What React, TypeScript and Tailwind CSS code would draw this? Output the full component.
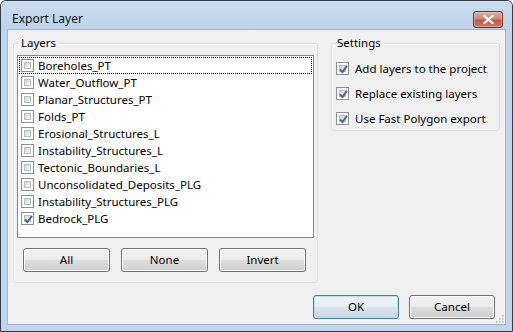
import React from "react";

const LAYERS = [
  { name: "Boreholes_PT", checked: false },
  { name: "Water_Outflow_PT", checked: false },
  { name: "Planar_Structures_PT", checked: false },
  { name: "Folds_PT", checked: false },
  { name: "Erosional_Structures_L", checked: false },
  { name: "Instability_Structures_L", checked: false },
  { name: "Tectonic_Boundaries_L", checked: false },
  { name: "Unconsolidated_Deposits_PLG", checked: false },
  { name: "Instability_Structures_PLG", checked: false },
  { name: "Bedrock_PLG", checked: true },
];

const SETTINGS = [
  "Add layers to the project",
  "Replace existing layers",
  "Use Fast Polygon export",
];

// win7 style checkbox, 13x13
const CheckBox = ({ checked }: { checked: boolean }) => (
  <span className="relative flex h-[13px] w-[13px] shrink-0 border border-[#8e8f8f] bg-white p-[2px]">
    <span className="block h-full w-full border border-[#b9bdc2] bg-[linear-gradient(135deg,#d3d6db,#f4f5f6)]" />
    {checked && (
      <svg className="absolute left-[1px] top-[1px]" width="11" height="11" viewBox="0 0 11 11">
        <path d="M2 5.4 L4.4 8.2 L9 1.8" fill="none" stroke="#4d6391" strokeWidth="2" strokeLinejoin="round" />
      </svg>
    )}
  </span>
);

const Button = ({ label, def, w }: { label: string; def?: boolean; w: string }) => (
  <button
    className={`${w} h-[24px] rounded-[3px] border text-[11.5px] text-black ${
      def
        ? "border-[#3c7fb1] bg-[linear-gradient(#eef4f8,#e6eef4_50%,#d8e3ec_50%,#cbd7e0)] shadow-[inset_0_0_0_1px_#b9e2f8]"
        : "border-[#707070] bg-[linear-gradient(#f2f2f2,#ebebeb_50%,#dddddd_50%,#cfcfcf)] shadow-[inset_0_0_0_1px_#fbfbfb]"
    }`}
  >
    {label}
  </button>
);

export default function App() {
  return (
    <div className="flex h-[332px] w-[513px] flex-col rounded-t-[6px] border border-[#343c45] bg-[#bfd5eb] font-['Segoe_UI','Noto_Sans',sans-serif] text-[11.5px] leading-[16px] text-black">
      {/* title bar */}
      <div className="flex h-[28px] shrink-0 items-start rounded-t-[5px] bg-[linear-gradient(#c9dcf0,#bdd4ea)]">
        <span className="ml-[11px] mt-[10px] text-[12px] text-[#111]">Export Layer</span>
        <span className="ml-auto mr-[9px] mt-[10px] flex h-[17px] w-[30px] items-center justify-center rounded-[3px] border border-[#6e2a1f] bg-[linear-gradient(#e0ab9e,#d18675_45%,#c25a44_55%,#cf7560)] shadow-[inset_0_0_0_1px_rgba(255,255,255,0.35)]">
          <svg width="11" height="9" viewBox="0 0 11 9">
            <path d="M1.5 1 L9.5 8 M9.5 1 L1.5 8" stroke="#fff" strokeWidth="2.2" strokeLinecap="square" />
          </svg>
        </span>
      </div>

      {/* client area */}
      <div className="mx-[6px] mb-[6px] flex flex-1 flex-col border border-[#9db4cc] bg-[#f0f0f0] pt-[5px]">
        <div className="flex items-start">
          <fieldset className="ml-[5px] w-[305px] rounded-[3px] border border-[#d5dfe5] px-[3px] pb-[10px] shadow-[inset_1px_1px_0_#fff]">
            <legend className="ml-[2px] px-[2px] leading-[16px]">Layers</legend>
            <div className="mt-[4px] h-[183px] border border-[#828790] bg-white px-[1px] pt-[1px]">
              {LAYERS.map((l, i) => (
                <div
                  key={l.name}
                  className={`flex h-[17px] items-center pl-[1px] ${
                    i === 0 ? "outline outline-1 -outline-offset-1 outline-dotted outline-black" : ""
                  }`}
                >
                  <span className="ml-[1px]">
                    <CheckBox checked={l.checked} />
                  </span>
                  <span className="ml-[4px] whitespace-nowrap">{l.name}</span>
                </div>
              ))}
            </div>
            <div className="ml-[6px] mt-[10px] flex gap-[11px]">
              <Button label="All" w="w-[87px]" />
              <Button label="None" w="w-[87px]" />
              <Button label="Invert" w="w-[87px]" />
            </div>
          </fieldset>

          <fieldset className="ml-[13px] w-[169px] rounded-[3px] border border-[#d5dfe5] pb-[3px] pl-[4px] shadow-[inset_1px_1px_0_#fff]">
            <legend className="px-[1px] leading-[16px]">Settings</legend>
            <div className="mt-[9px] flex flex-col gap-[8px]">
              {SETTINGS.map((s) => (
                <div key={s} className="flex h-[17px] items-center">
                  <CheckBox checked />
                  <span className="ml-[6px] whitespace-nowrap">{s}</span>
                </div>
              ))}
            </div>
          </fieldset>
        </div>

        <div className="relative mt-auto flex justify-end gap-[10px] pb-[5px] pr-[10px]">
          <Button label="OK" def w="w-[86px]" />
          <Button label="Cancel" w="w-[86px]" />
          <svg className="absolute bottom-[1px] right-[1px]" width="10" height="10" viewBox="0 0 10 10">
            {[
              [8, 2],
              [8, 5],
              [5, 5],
              [8, 8],
              [5, 8],
              [2, 8],
            ].map(([x, y]) => (
              <rect key={`${x}-${y}`} x={x} y={y} width="1.5" height="1.5" fill="#b7bcc2" />
            ))}
          </svg>
        </div>
      </div>
    </div>
  );
}
